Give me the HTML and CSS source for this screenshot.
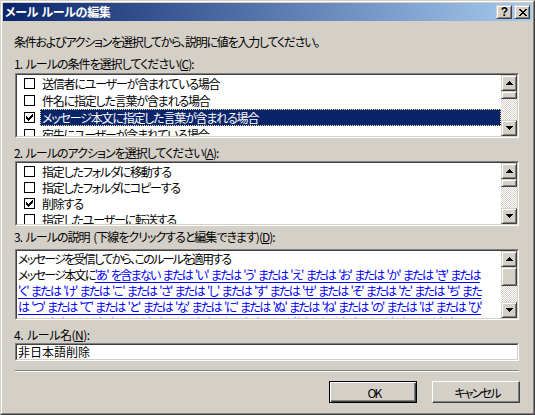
FILE: index.html
```html
<!DOCTYPE html>
<html lang="ja">
<head>
<meta charset="utf-8">
<title>メール ルールの編集</title>
<link rel="stylesheet" href="styles.css">
</head>
<body>
<div class="win">
 <div class="win2">
  <div class="win3">
   <div class="title">
    <span class="title-text">メール ルールの編集</span>
    <div class="cap-btns">
     <span class="cap-btn raised help">?</span>
     <span class="cap-btn raised close"><svg width="8" height="7" viewBox="0 0 8 7" shape-rendering="crispEdges"><path d="M0 0h2v1H0zM6 0h2v1H6zM1 1h2v1H1zM5 1h2v1H5zM2 2h4v1H2zM3 3h2v1H3zM2 4h4v1H2zM1 5h2v1H1zM5 5h2v1H5zM0 6h2v1H0zM6 6h2v1H6z" fill="#000"/></svg></span>
    </div>
   </div>
   <div class="content">
    <div class="lbl intro">条件およびアクションを選択してから、説明に値を入力してください。</div>
    <div class="lbl l1">1. ルールの条件を選択してください(<u>C</u>):</div>
    <div class="sunken list list1">
     <div class="sunken-in">
      <div class="items">
       <div class="row"><svg class="cb" width="11" height="11" viewBox="0 0 11 11" shape-rendering="crispEdges"><rect x="0.5" y="0.5" width="10" height="10" fill="#fff" stroke="#000"/></svg><span class="txt">送信者にユーザーが含まれている場合</span></div>
       <div class="row"><svg class="cb" width="11" height="11" viewBox="0 0 11 11" shape-rendering="crispEdges"><rect x="0.5" y="0.5" width="10" height="10" fill="#fff" stroke="#000"/></svg><span class="txt">件名に指定した言葉が含まれる場合</span></div>
       <div class="row sel"><svg class="cb" width="11" height="11" viewBox="0 0 11 11" shape-rendering="crispEdges"><rect x="0.5" y="0.5" width="10" height="10" fill="#fff" stroke="#000"/><path d="M8 2h1v1H8zM7 3h2v1H7zM2 4h1v1H2zM6 4h3v1H6zM2 5h2v1H2zM5 5h3v1H5zM2 6h5v1H2zM3 7h3v1H3zM4 8h1v1H4z" fill="#000"/></svg><span class="txt">メッセージ本文に指定した言葉が含まれる場合</span></div>
       <div class="row"><svg class="cb" width="11" height="11" viewBox="0 0 11 11" shape-rendering="crispEdges"><rect x="0.5" y="0.5" width="10" height="10" fill="#fff" stroke="#000"/></svg><span class="txt">宛先にユーザーが含まれている場合</span></div>
      </div>
      <div class="vscroll">
       <div class="sbtn raised"><svg width="7" height="4" viewBox="0 0 7 4" shape-rendering="crispEdges"><path d="M3 0h1v1h1v1h1v1h1v1H0V3h1V2h1V1h1z" fill="#000"/></svg></div>
       <div class="thumb raised small"></div>
       <div class="track"></div>
       <div class="sbtn raised"><svg width="7" height="4" viewBox="0 0 7 4" shape-rendering="crispEdges"><path d="M0 0h7v1H6v1H5v1H4v1H3V3H2V2H1V1H0z" fill="#000"/></svg></div>
      </div>
     </div>
    </div>
    <div class="lbl l2">2. ルールのアクションを選択してください(<u>A</u>):</div>
    <div class="sunken list list2">
     <div class="sunken-in">
      <div class="items">
       <div class="row"><svg class="cb" width="11" height="11" viewBox="0 0 11 11" shape-rendering="crispEdges"><rect x="0.5" y="0.5" width="10" height="10" fill="#fff" stroke="#000"/></svg><span class="txt">指定したフォルダに移動する</span></div>
       <div class="row"><svg class="cb" width="11" height="11" viewBox="0 0 11 11" shape-rendering="crispEdges"><rect x="0.5" y="0.5" width="10" height="10" fill="#fff" stroke="#000"/></svg><span class="txt">指定したフォルダにコピーする</span></div>
       <div class="row"><svg class="cb" width="11" height="11" viewBox="0 0 11 11" shape-rendering="crispEdges"><rect x="0.5" y="0.5" width="10" height="10" fill="#fff" stroke="#000"/><path d="M8 2h1v1H8zM7 3h2v1H7zM2 4h1v1H2zM6 4h3v1H6zM2 5h2v1H2zM5 5h3v1H5zM2 6h5v1H2zM3 7h3v1H3zM4 8h1v1H4z" fill="#000"/></svg><span class="txt">削除する</span></div>
       <div class="row"><svg class="cb" width="11" height="11" viewBox="0 0 11 11" shape-rendering="crispEdges"><rect x="0.5" y="0.5" width="10" height="10" fill="#fff" stroke="#000"/></svg><span class="txt">指定したユーザーに転送する</span></div>
      </div>
      <div class="vscroll">
       <div class="sbtn raised"><svg width="7" height="4" viewBox="0 0 7 4" shape-rendering="crispEdges"><path d="M3 0h1v1h1v1h1v1h1v1H0V3h1V2h1V1h1z" fill="#000"/></svg></div>
       <div class="thumb raised small"></div>
       <div class="track"></div>
       <div class="sbtn raised"><svg width="7" height="4" viewBox="0 0 7 4" shape-rendering="crispEdges"><path d="M0 0h7v1H6v1H5v1H4v1H3V3H2V2H1V1H0z" fill="#000"/></svg></div>
      </div>
     </div>
    </div>
    <div class="lbl l3">3. ルールの説明 (下線をクリックすると編集できます)(<u>D</u>):</div>
    <div class="sunken desc">
     <div class="sunken-in">
      <div class="dtext">
       <div class="line">メッセージを受信してから、このルールを適用する</div>
       <div class="line">メッセージ本文に<span class="lnk">'あ' を含まない または 'い' または 'う' または 'え' または 'お' または 'か' または 'き' または</span></div>
       <div class="line"><span class="lnk">'く' または 'け' または 'こ' または 'さ' または 'し' または 'す' または 'せ' または 'そ' または 'た' または 'ち' また</span></div>
       <div class="line"><span class="lnk">は 'つ' または 'て' または 'と' または 'な' または 'に' または 'ぬ' または 'ね' または 'の' または 'は' または 'ひ'</span></div>
       <div class="line"><span class="lnk">または 'ふ' または 'へ' または 'ほ' または 'ま' または 'み' または 'む' または 'め' または 'も' または 'や'</span></div>
      </div>
      <div class="vscroll">
       <div class="sbtn raised"><svg width="7" height="4" viewBox="0 0 7 4" shape-rendering="crispEdges"><path d="M3 0h1v1h1v1h1v1h1v1H0V3h1V2h1V1h1z" fill="#000"/></svg></div>
       <div class="thumb raised big"></div>
       <div class="track"></div>
       <div class="sbtn raised"><svg width="7" height="4" viewBox="0 0 7 4" shape-rendering="crispEdges"><path d="M0 0h7v1H6v1H5v1H4v1H3V3H2V2H1V1H0z" fill="#000"/></svg></div>
      </div>
     </div>
    </div>
    <div class="lbl l4">4. ルール名(<u>N</u>):</div>
    <div class="sunken edit">
     <div class="sunken-in"><span class="etext">非日本語削除</span></div>
    </div>
    <div class="sep"></div>
    <div class="btns">
     <div class="btn default">OK</div>
     <div class="btn">キャンセル</div>
    </div>
   </div>
  </div>
 </div>
</div>
</body>
</html>
```
FILE: styles.css
```css
* { box-sizing: border-box; }
html, body { margin: 0; padding: 0; }
body {
  width: 535px;
  height: 415px;
  overflow: hidden;
  background: #d4d0c8;
  color: #000;
  font-family: "Noto Sans CJK JP", "Noto Sans", sans-serif;
  font-size: 12px;
  font-feature-settings: "palt";
}
u { text-decoration: underline; text-underline-offset: 1px; }

.win {
  width: 535px;
  height: 415px;
  border: 1px solid;
  border-color: #d4d0c8 #404040 #404040 #d4d0c8;
}
.win2 {
  height: 100%;
  border: 1px solid;
  border-color: #fff #808080 #808080 #fff;
}
.win3 {
  height: 100%;
  padding: 1px;
  background: #d4d0c8;
  display: flex;
  flex-direction: column;
}

.title {
  flex: none;
  height: 18px;
  display: flex;
  align-items: center;
  padding: 0 2px;
  background: linear-gradient(to right, #0a246a, #a6caf0);
}
.title-text {
  flex: 1;
  color: #fff;
  font-weight: bold;
  letter-spacing: -0.3px;
  word-spacing: 1px;
  line-height: 18px;
  white-space: nowrap;
}
.cap-btns { display: flex; gap: 2px; }

.raised {
  background: #d4d0c8;
  border: 1px solid;
  border-color: #d4d0c8 #404040 #404040 #d4d0c8;
  box-shadow: inset 1px 1px #fff, inset -1px -1px #808080;
}
.cap-btn {
  width: 16px;
  height: 14px;
  display: flex;
  align-items: center;
  justify-content: center;
}
.help {
  font-family: "Liberation Sans", sans-serif;
  font-weight: bold;
  font-size: 12px;
  line-height: 12px;
  padding-left: 1px;
}
.close svg { display: block; margin-left: 1px; }

.content {
  flex: 1;
  display: flex;
  flex-direction: column;
  padding: 0 13px 0 12px;
}
.lbl {
  flex: none;
  height: 16px;
  line-height: 16px;
  margin-left: -1px;
  white-space: nowrap;
  letter-spacing: -1px;
  word-spacing: 2px;
}
.intro { margin-top: 13px; letter-spacing: -1.25px; }
.l1 { margin-top: 6px; }
.l2 { margin-top: 7px; }
.l3 { margin-top: 3px; }
.l4 { margin-top: 7px; letter-spacing: -0.5px; }

.sunken {
  flex: none;
  border: 1px solid;
  border-color: #808080 #fff #fff #808080;
}
.sunken-in {
  height: 100%;
  border: 1px solid;
  border-color: #404040 #d4d0c8 #d4d0c8 #404040;
  background: #fff;
  display: flex;
  overflow: hidden;
}
.list1 { margin-top: 1px; height: 65px; }
.list2 { height: 65px; }
.desc { margin-top: 4px; height: 71px; }
.edit { height: 18px; }

.items { flex: 1; overflow: hidden; }
.row {
  height: 17px;
  display: flex;
  align-items: center;
  padding-left: 7px;
}
.list2 .row { height: 16px; }
.cb { flex: none; display: block; margin-right: 5px; }
.txt {
  flex: 1;
  height: 100%;
  display: flex;
  align-items: center;
  padding-left: 2px;
  white-space: nowrap;
  letter-spacing: -1.2px;
}
.sel .txt {
  background: #0a246a;
  color: #fff;
  outline: 1px dotted #f3e7a6;
  outline-offset: -1px;
}

.vscroll {
  flex: none;
  width: 16px;
  display: flex;
  flex-direction: column;
}
.sbtn {
  flex: none;
  height: 16px;
  display: flex;
  align-items: center;
  justify-content: center;
}
.sbtn svg { display: block; margin-left: 1px; }
.thumb { flex: none; }
.thumb.small { height: 8px; }
.thumb.big { height: 19px; }
.track {
  flex: 1;
  background-color: #d4d0c8;
  background-image: conic-gradient(#fff 25%, #d4d0c8 0 50%, #fff 0 75%, #d4d0c8 0);
  background-size: 2px 2px;
}

.dtext {
  flex: 1;
  overflow: hidden;
  padding-left: 1px;
  white-space: nowrap;
  letter-spacing: -1.7px;
  word-spacing: 2px;
}
.line { height: 16px; line-height: 16px; }
.lnk {
  color: #0000ff;
  text-decoration: underline;
  text-underline-offset: 2px;
}

.edit .sunken-in { align-items: center; padding-left: 1px; }
.etext { white-space: nowrap; line-height: 14px; }

.sep {
  flex: none;
  margin-top: 9px;
  height: 2px;
  border-top: 1px solid #808080;
  border-bottom: 1px solid #fff;
}

.btns {
  flex: none;
  margin-top: 9px;
  margin-right: -1px;
  display: flex;
  justify-content: flex-end;
  gap: 15px;
}
.btn {
  width: 88px;
  height: 22px;
  display: flex;
  align-items: center;
  justify-content: center;
  background: #d4d0c8;
  border: 1px solid;
  border-color: #fff #404040 #404040 #fff;
  box-shadow: inset -1px -1px #808080;
  white-space: nowrap;
  letter-spacing: -1.8px;
  padding-left: 2px;
}
.btn.default {
  border: 1px solid #000;
  box-shadow: inset 1px 1px #fff, inset -1px -1px #404040, inset -2px -2px #808080;
}
```
